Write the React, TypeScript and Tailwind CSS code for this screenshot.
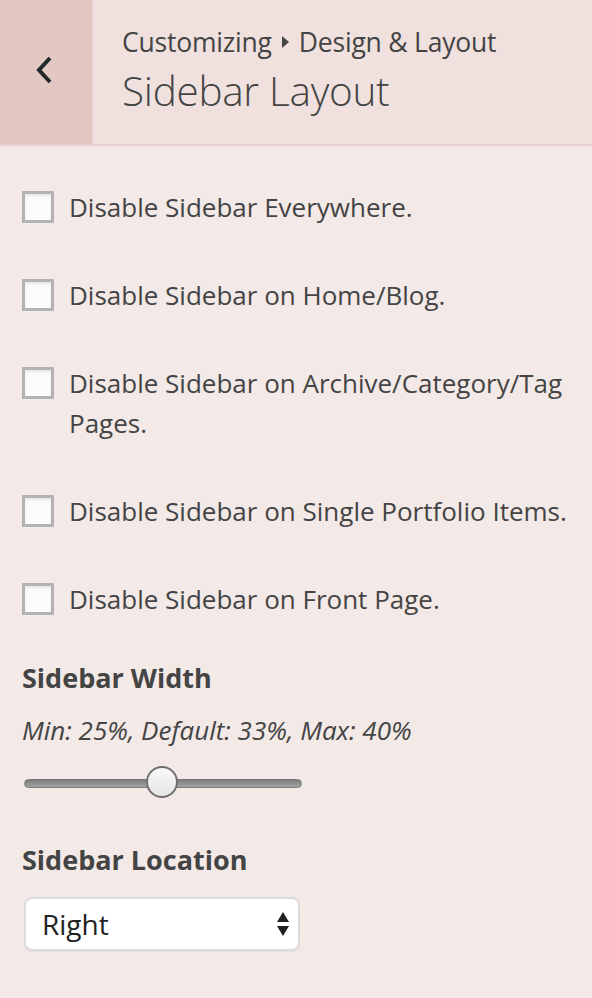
import React from "react";

const items: string[] = [
  "Disable Sidebar Everywhere.",
  "Disable Sidebar on Home/Blog.",
  "Disable Sidebar on Archive/Category/Tag Pages.",
  "Disable Sidebar on Single Portfolio Items.",
  "Disable Sidebar on Front Page.",
];

export default function App() {
  return (
    <div
      className="w-[592px] h-[998px] bg-[#f3e9e7] text-[#444] overflow-hidden"
      style={{ fontFamily: '"Open Sans", sans-serif' }}
    >
      <div className="flex h-[146px] border-b-2 border-[#e6d2ce] bg-[#f0e1de]">
        <div className="w-[93px] bg-[#e3c7c2] flex items-center justify-center border-r border-[#e8d5d1]">
          <svg width="20" height="30" viewBox="0 0 20 30" className="ml-[-2px] mt-[-4px]">
            <path d="M15 3 L4 15 L15 27" fill="none" stroke="#23282d" strokeWidth="4" strokeLinecap="butt" />
          </svg>
        </div>
        <div className="flex-1 pl-[29px] pt-[24px]">
          <div className="flex items-center text-[26.5px] leading-[36px] text-[#444] tracking-[-0.2px]">
            <span>Customizing</span>
            <svg width="12" height="16" viewBox="0 0 12 16" className="ml-[7px] mr-[8px]">
              <path d="M3 2 L10 8 L3 14 Z" fill="#444" />
            </svg>
            <span>Design &amp; Layout</span>
          </div>
          <div className="text-[40.5px] leading-[52px] font-light text-[#444] mt-[5px] tracking-[-0.3px]">
            Sidebar Layout
          </div>
        </div>
      </div>

      <div className="px-[22px] pt-[41px]">
        <div className="flex flex-col gap-[48px]">
          {items.map((t) => (
            <label key={t} className="flex items-start gap-[15px]">
              <span className="mt-[4px] w-[32px] h-[32px] shrink-0 bg-[#fbfbfb] border-[3px] border-[#b4b4b4] shadow-[inset_0_2px_3px_rgba(0,0,0,0.08)]" />
              <span className="text-[26px] leading-[40px] text-[#444]">{t}</span>
            </label>
          ))}
        </div>

        <div className="mt-[39px] text-[27px] leading-[40px] font-bold text-[#444]">Sidebar Width</div>
        <div className="mt-[14px] text-[26px] leading-[36px] italic text-[#444]">
          Min: 25%, Default: 33%, Max: 40%
        </div>
        <div className="relative mt-[18px] ml-[2px] w-[278px] h-[34px] flex items-center">
          <div className="w-full h-[9px] rounded-full bg-gradient-to-b from-[#7d7d7d] to-[#a3a3a3] border border-[#777]" />
          <div className="absolute left-[122px] top-0 w-[32px] h-[32px] rounded-full bg-gradient-to-b from-[#fafafa] to-[#e4e4e4] border-2 border-[#6f6f6f]" />
        </div>

        <div className="mt-[40px] text-[27px] leading-[40px] font-bold text-[#444]">Sidebar Location</div>
        <div className="mt-[17px] ml-[2px] w-[276px] h-[54px] rounded-[8px] bg-white border-2 border-[#dcdcdc] flex items-center justify-between pl-[16px] pr-[8px] shadow-[0_1px_1px_rgba(0,0,0,0.05)]">
          <span className="text-[28px] text-[#222]">Right</span>
          <svg width="14" height="26" viewBox="0 0 14 26">
            <path d="M7 1 L13 11 L1 11 Z" fill="#222" />
            <path d="M1 15 L13 15 L7 25 Z" fill="#222" />
          </svg>
        </div>
      </div>
    </div>
  );
}
